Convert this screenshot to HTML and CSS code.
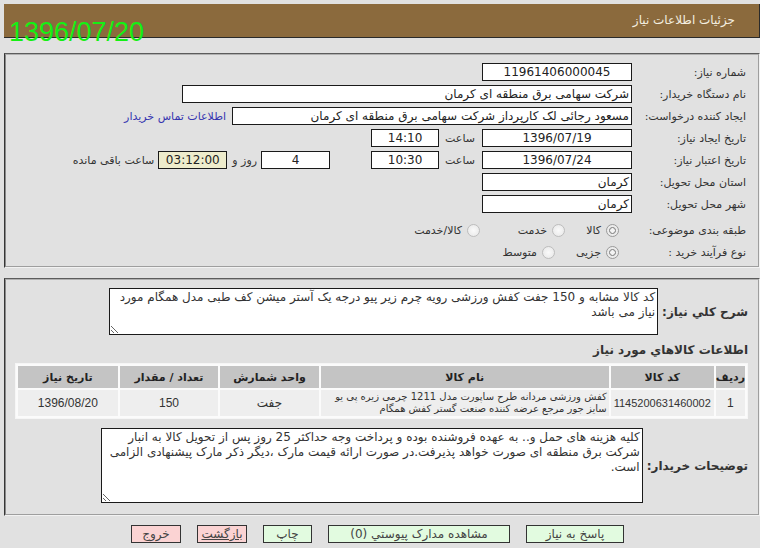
FILE: index.html
```html
<!DOCTYPE html>
<html lang="fa" dir="rtl">
<head>
  <meta charset="UTF-8">
  <title>جزئیات اطلاعات نیاز</title>
  <link rel="stylesheet" href="styles.css">
</head>
<body>
  <div class="page">
    <!-- عنوان صفحه -->
    <div class="header">جزئیات اطلاعات نیاز</div>
    <div class="today">1396/07/20</div>

    <!-- مشخصات نیاز -->
    <div class="panel info">
      <div class="row">
        <span class="lbl">شماره نیاز:</span>
        <span class="field w150 center">11961406000045</span>
      </div>
      <div class="row">
        <span class="lbl">نام دستگاه خریدار:</span>
        <span class="field w450">شرکت سهامی برق منطقه ای کرمان</span>
      </div>
      <div class="row">
        <span class="lbl">ایجاد کننده درخواست:</span>
        <span class="field w400">مسعود رجائی لک کارپرداز شرکت سهامی برق منطقه ای کرمان</span>
        <a class="contact" href="#">اطلاعات تماس خریدار</a>
      </div>
      <div class="row">
        <span class="lbl">تاریخ ایجاد نیاز:</span>
        <span class="field w150 center">1396/07/19</span>
        <span class="txt">ساعت</span>
        <span class="field w68 center">14:10</span>
      </div>
      <div class="row">
        <span class="lbl">تاریخ اعتبار نیاز:</span>
        <span class="field w150 center">1396/07/24</span>
        <span class="txt">ساعت</span>
        <span class="field w68 center">10:30</span>
        <span class="field w69 center days">4</span>
        <span class="txt small-gap">روز و</span>
        <span class="field w69 center remain">03:12:00</span>
        <span class="txt small-gap">ساعت باقی مانده</span>
      </div>
      <div class="row">
        <span class="lbl">استان محل تحویل:</span>
        <span class="field w150">کرمان</span>
      </div>
      <div class="row">
        <span class="lbl">شهر محل تحویل:</span>
        <span class="field w150">کرمان</span>
      </div>
      <div class="row radios first">
        <span class="lbl">طبقه بندی موضوعی:</span>
        <span class="opt opt-67"><span class="radio on"></span>کالا</span>
        <span class="opt opt-85"><span class="radio"></span>خدمت</span>
        <span class="opt"><span class="radio"></span>کالا/خدمت</span>
      </div>
      <div class="row radios">
        <span class="lbl">نوع فرآیند خرید :</span>
        <span class="opt opt-77"><span class="radio on"></span>جزیی</span>
        <span class="opt"><span class="radio"></span>متوسط</span>
      </div>
    </div>

    <!-- شرح و کالاها -->
    <div class="panel detail">
      <div class="note-row">
        <span class="blbl">شرح کلي نیاز:</span>
        <textarea class="note n1" readonly>کد کالا مشابه و 150 جفت کفش ورزشی رویه چرم زیر پیو درجه یک آستر میشن کف طبی مدل همگام مورد نیاز می باشد</textarea>
      </div>

      <h3 class="goods-title">اطلاعات کالاهاي مورد نیاز</h3>
      <table class="goods">
        <tr>
          <th class="c-idx">ردیف</th>
          <th class="c-code">کد کالا</th>
          <th class="c-name">نام کالا</th>
          <th class="c-unit">واحد شمارش</th>
          <th class="c-qty">تعداد / مقدار</th>
          <th class="c-date">تاریخ نیاز</th>
        </tr>
        <tr>
          <td>1</td>
          <td class="code">1145200631460002</td>
          <td class="name">کفش ورزشی مردانه طرح ساپورت مدل 1211 چرمی زیره پی یو سایز جور مرجع عرضه کننده صنعت گستر کفش همگام</td>
          <td>جفت</td>
          <td>150</td>
          <td>1396/08/20</td>
        </tr>
      </table>

      <div class="note-row">
        <span class="blbl">توضیحات خریدار:</span>
        <textarea class="note n2" readonly>کلیه هزینه های حمل و.. به عهده فروشنده بوده و پرداخت وجه حداکثر 25 روز پس از تحویل کالا به انبار شرکت برق منطقه ای صورت خواهد پذیرفت.در صورت ارائه قیمت مارک ،دیگر ذکر مارک پیشنهادی الزامی است.</textarea>
      </div>
    </div>

    <!-- دکمه ها -->
    <div class="actions">
      <button class="btn green w98">پاسخ به نیاز</button>
      <button class="btn green w182">مشاهده مدارک پیوستي (0)</button>
      <button class="btn green w49">چاپ</button>
      <button class="btn pink w50 under">بازگشت</button>
      <button class="btn pink w50">خروج</button>
    </div>
  </div>
</body>
</html>
```

FILE: styles.css
```css
/* پایه */
body {
  margin: 0;
  background-color: #e1e1e1;
  font-family: "DejaVu Sans", Tahoma, sans-serif;
  font-size: 11px;
  color: #333;
}

.page {
  position: relative;
  width: 756px;
  margin-left: 1px;
  padding-top: 4px;
}

.header {
  height: 33px;
  line-height: 33px;
  background-color: #8b6a3d;
  border-bottom: 1px solid #2a2a2a;
  border-right: 1px solid #2a2a2a;
  color: #f4efe0;
  padding-right: 24px;
  font-size: 12px;
}

.today {
  position: absolute;
  left: 5px;
  top: 17px;
  font-family: "Liberation Sans", Arial, sans-serif;
  font-size: 27px;
  color: #14f014;
  direction: ltr;
}

.panel {
  border: 2px groove #f2f2f2;
  border-left-color: #8a8a8a;
  border-top-color: #b0b0b0;
}

/* مشخصات */
.info {
  margin-top: 15px;
  padding: 8px 12px 5px 12px;
  display: flex;
  flex-direction: column;
  gap: 4px;
}

.row {
  display: flex;
  align-items: center;
  height: 18px;
}

.lbl {
  width: 111px;
  margin-left: 3px;
  color: #333;
  white-space: nowrap;
}

.field {
  box-sizing: border-box;
  height: 18px;
  line-height: 16px;
  border: 1px solid #1a1a1a;
  background-color: #fff;
  padding: 0 2px;
  font-size: 12px;
  color: #222;
  white-space: nowrap;
  overflow: hidden;
}

.center { text-align: center; }
.w150 { width: 150px; }
.w450 { width: 450px; }
.w400 { width: 400px; }
.w68 { width: 68px; }
.w69 { width: 69px; }

.txt {
  margin: 0 7px 0 6px;
  white-space: nowrap;
}

.small-gap { margin: 0 4px 0 5px; }

.days { margin-right: 41px; }

.remain { background-color: #eeeccc; }

.contact {
  margin-right: 6px;
  color: #3535b0;
  text-decoration: none;
}

.radios.first { margin-top: 4px; }

.opt {
  display: flex;
  align-items: center;
  white-space: nowrap;
}

.opt-67 { width: 67px; }
.opt-77 { width: 77px; }
.opt-85 { width: 85px; }

.radio {
  box-sizing: border-box;
  width: 13px;
  height: 13px;
  border-radius: 50%;
  border: 1px solid #bdbdbd;
  background: radial-gradient(circle, #fafafa 0, #e6e6e6 100%);
  margin: 0 0 0 5px;
}

.lbl + .opt .radio { margin-right: 13px; }

.radio.on {
  border-color: #9a9a9a;
  background: radial-gradient(circle, #f4f4f4 0, #f4f4f4 2px, #9a9a9a 2.5px, #9a9a9a 3.2px, #ececec 3.8px);
}

/* شرح و کالاها */
.detail {
  margin-top: 10px;
  padding: 8px 10px 11px 11px;
}

.note-row {
  display: flex;
  align-items: center;
}

.blbl {
  font-weight: bold;
  font-size: 12px;
  color: #333;
  margin-left: 4px;
  white-space: nowrap;
}

.note {
  box-sizing: border-box;
  border: 1px solid #1a1a1a;
  background-color: #fff;
  font-family: "DejaVu Sans", Tahoma, sans-serif;
  font-size: 12px;
  line-height: 15px;
  color: #333;
  padding: 1px 2px;
  overflow: hidden;
  margin: 0;
}

.n1 { width: 549px; height: 47px; }
.n2 { width: 542px; height: 75px; }

.goods-title {
  margin: 8px 0 6px;
  font-size: 12px;
  font-weight: bold;
  color: #333;
}

.goods {
  width: 733px;
  border-collapse: separate;
  border-spacing: 2px;
  border: 1px solid #f6f6f6;
  background-color: #fbfbfb;
  margin-bottom: 9px;
}

.goods th {
  height: 22px;
  background-color: #c4c4c4;
  font-size: 11px;
  color: #222;
  padding: 0;
}

.goods td {
  height: 26px;
  background-color: #eeeeee;
  text-align: center;
  font-family: "Liberation Sans", "DejaVu Sans", sans-serif;
  font-size: 12px;
  color: #333;
  padding: 0 3px;
}

.goods td.code { font-size: 11px; }

.goods td.name {
  text-align: right;
  font-family: "DejaVu Sans", sans-serif;
  font-size: 10px;
  line-height: 12px;
  padding: 0 2px;
  letter-spacing: -0.1px;
}

.c-idx { width: 28px; }
.c-code { width: 102px; }
.c-name { width: 290px; }
.c-unit { width: 99px; }
.c-qty { width: 99px; }
.c-date { width: 100px; }

/* دکمه ها */
.actions {
  display: flex;
  justify-content: center;
  gap: 16px;
  margin-top: 9px;
  padding-right: 9px;
}

.btn {
  box-sizing: border-box;
  height: 18px;
  padding: 0;
  border: 1px solid #333;
  font-family: "DejaVu Sans", Tahoma, sans-serif;
  font-size: 12px;
  color: #444;
  line-height: 16px;
}

.green { background-color: #e2fbe0; }
.pink { background-color: #fbd3d3; }
.under { text-decoration: underline; }

.w98 { width: 98px; }
.w182 { width: 182px; }
.w49 { width: 49px; }
.w50 { width: 50px; }
```
